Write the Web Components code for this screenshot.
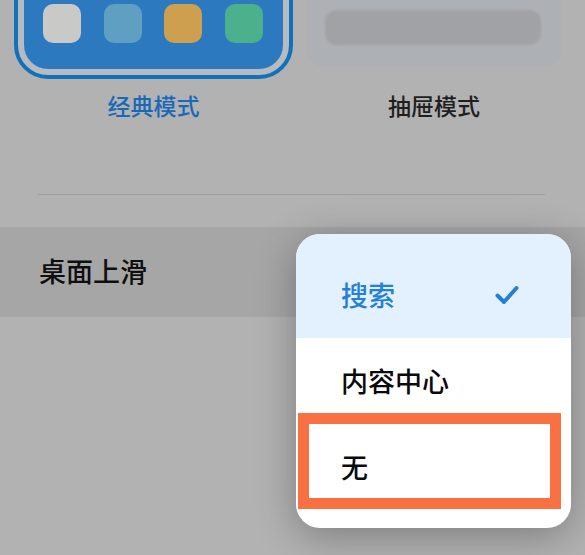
<!DOCTYPE html>
<html lang="zh">
<head>
<meta charset="utf-8">
<title>桌面设置</title>
<style>
html,body{margin:0;height:100%;overflow:hidden;background:#b2b2b2}
body{font-family:"Noto Sans CJK SC","Noto Sans",sans-serif}
</style>
</head>
<body>
<desktop-settings>
    <mode-card slot="modes" kind="classic" active>
        <app-tile color="#c9c9c8"></app-tile>
        <app-tile color="#5f9fc1"></app-tile>
        <app-tile color="#cf9f50"></app-tile>
        <app-tile color="#4db08c"></app-tile>
        <span slot="label">经典模式</span>
    </mode-card>
    <mode-card slot="modes" kind="drawer">
        <span slot="label">抽屉模式</span>
    </mode-card>
    <settings-row slot="rows">桌面上滑</settings-row>
    <pop-menu slot="menu">
        <menu-item selected>搜索</menu-item>
        <menu-item>内容中心</menu-item>
        <menu-item marked>无</menu-item>
    </pop-menu>
</desktop-settings>

<script>
class DesktopSettings extends HTMLElement{
    constructor(){
        super()
        this.attachShadow({mode: 'open'})
        this.shadowRoot.innerHTML = `
            <style>
                :host{
                    display: block;
                    position: relative;
                    width: 585px;
                    height: 555px;
                    overflow: hidden;
                    background: #b2b2b2;
                }
                #modes{
                    display: grid;
                    grid-template-columns: 279px 254px;
                    column-gap: 14px;
                    margin-top: -60px;
                    padding-left: 14px;
                }
                #divider{
                    height: 1px;
                    margin: 74px 40px 32px 38px;
                    background: #9f9f9f;
                }
                #menu{
                    position: absolute;
                    left: 296px;
                    top: 234px;
                }
            </style>
            <div id="modes"><slot name="modes"></slot></div>
            <div id="divider"></div>
            <slot name="rows"></slot>
            <div id="menu"><slot name="menu"></slot></div>
        `
    }
}

class ModeCard extends HTMLElement{
    constructor(){
        super()
        this.attachShadow({mode: 'open'})
        this.shadowRoot.innerHTML = `
            <style>
                :host{
                    display: flex;
                    flex-direction: column;
                    align-items: stretch;
                }
                #frame{
                    box-sizing: border-box;
                    height: 139px;
                    padding: 6px;
                    border: 4px solid #1171bb;
                    border-radius: 34px;
                    background: #b6bac1;
                }
                #screen{
                    display: flex;
                    justify-content: space-between;
                    align-items: flex-start;
                    box-sizing: border-box;
                    height: 100%;
                    padding: 54px 20px 0 19px;
                    border-radius: 24px;
                    background: #2d79c0;
                }
                #pill{display: none}
                :host([kind=drawer]) #frame{
                    height: 126px;
                    margin-bottom: 13px;
                    padding: 70px 20px 21px 18px;
                    border: 0;
                    border-radius: 0 0 14px 14px;
                    background: #adb0b5;
                }
                :host([kind=drawer]) #screen{display: none}
                :host([kind=drawer]) #pill{
                    display: block;
                    height: 35px;
                    border-radius: 12px;
                    background: #a1a2a5;
                    filter: blur(1px);
                }
                #label{
                    margin-top: 11px;
                    font: 500 23px/30px "Noto Sans CJK SC", "Noto Sans", sans-serif;
                    text-align: center;
                    color: #1f1f1f;
                }
                :host([active]) #label{color: #1a69b8}
            </style>
            <div id="frame">
                <div id="screen"><slot></slot></div>
                <div id="pill"></div>
            </div>
            <div id="label"><slot name="label"></slot></div>
        `
    }
}

class AppTile extends HTMLElement{
    constructor(){
        super()
        this.attachShadow({mode: 'open'})
        this.shadowRoot.innerHTML = `
            <style>
                :host{
                    display: block;
                    width: 38px;
                    height: 39px;
                    border-radius: 10px;
                    background: var(--tile, #ccc);
                }
            </style>
        `
    }
    connectedCallback(){
        this.style.setProperty('--tile', this.getAttribute('color'))
    }
}

class SettingsRow extends HTMLElement{
    constructor(){
        super()
        this.attachShadow({mode: 'open'})
        this.shadowRoot.innerHTML = `
            <style>
                :host{
                    display: flex;
                    align-items: center;
                    box-sizing: border-box;
                    height: 90px;
                    padding: 0 39px 2px;
                    background: #a6a6a6;
                    font: 500 27px/36px "Noto Sans CJK SC", "Noto Sans", sans-serif;
                    color: #0f0f0f;
                }
            </style>
            <slot></slot>
        `
    }
}

class PopMenu extends HTMLElement{
    constructor(){
        super()
        this.attachShadow({mode: 'open'})
        this.shadowRoot.innerHTML = `
            <style>
                :host{
                    display: flex;
                    flex-direction: column;
                    width: 275px;
                    height: 294px;
                    border-radius: 24px;
                    background: #fff;
                    box-shadow: 0 8px 40px rgba(0,0,0,.3);
                }
            </style>
            <slot></slot>
        `
    }
}

class MenuItem extends HTMLElement{
    constructor(){
        super()
        this.attachShadow({mode: 'open'})
        this.shadowRoot.innerHTML = `
            <style>
                :host{
                    display: flex;
                    align-items: center;
                    justify-content: space-between;
                    position: relative;
                    box-sizing: border-box;
                    height: 86px;
                    padding: 0 52px 0 45px;
                    font: 500 27px/36px "Noto Sans CJK SC", "Noto Sans", sans-serif;
                    color: #0a0a0a;
                }
                :host([selected]){
                    height: 104px;
                    padding-top: 18px;
                    border-radius: 24px 24px 0 0;
                    background: #e3f0fd;
                    color: #2280d9;
                }
                :host([marked]){
                    height: 104px;
                    padding-bottom: 18px;
                }
                svg{display: none}
                :host([selected]) svg{display: block}
                #mark{display: none}
                :host([marked]) #mark{
                    display: block;
                    position: absolute;
                    left: 2px;
                    top: -11px;
                    width: 263px;
                    height: 96px;
                    box-sizing: border-box;
                    border: 11px solid #f97042;
                }
            </style>
            <slot></slot>
            <svg width="24" height="20" viewBox="0 0 24 20" fill="none">
                <path d="M2.5 10.5 9 17 21.5 3" stroke="#2280d9" stroke-width="4" stroke-linecap="round" stroke-linejoin="round"/>
            </svg>
            <div id="mark"></div>
        `
    }
}

customElements.define('desktop-settings', DesktopSettings)
customElements.define('mode-card', ModeCard)
customElements.define('app-tile', AppTile)
customElements.define('settings-row', SettingsRow)
customElements.define('pop-menu', PopMenu)
customElements.define('menu-item', MenuItem)
</script>
</body>
</html>
